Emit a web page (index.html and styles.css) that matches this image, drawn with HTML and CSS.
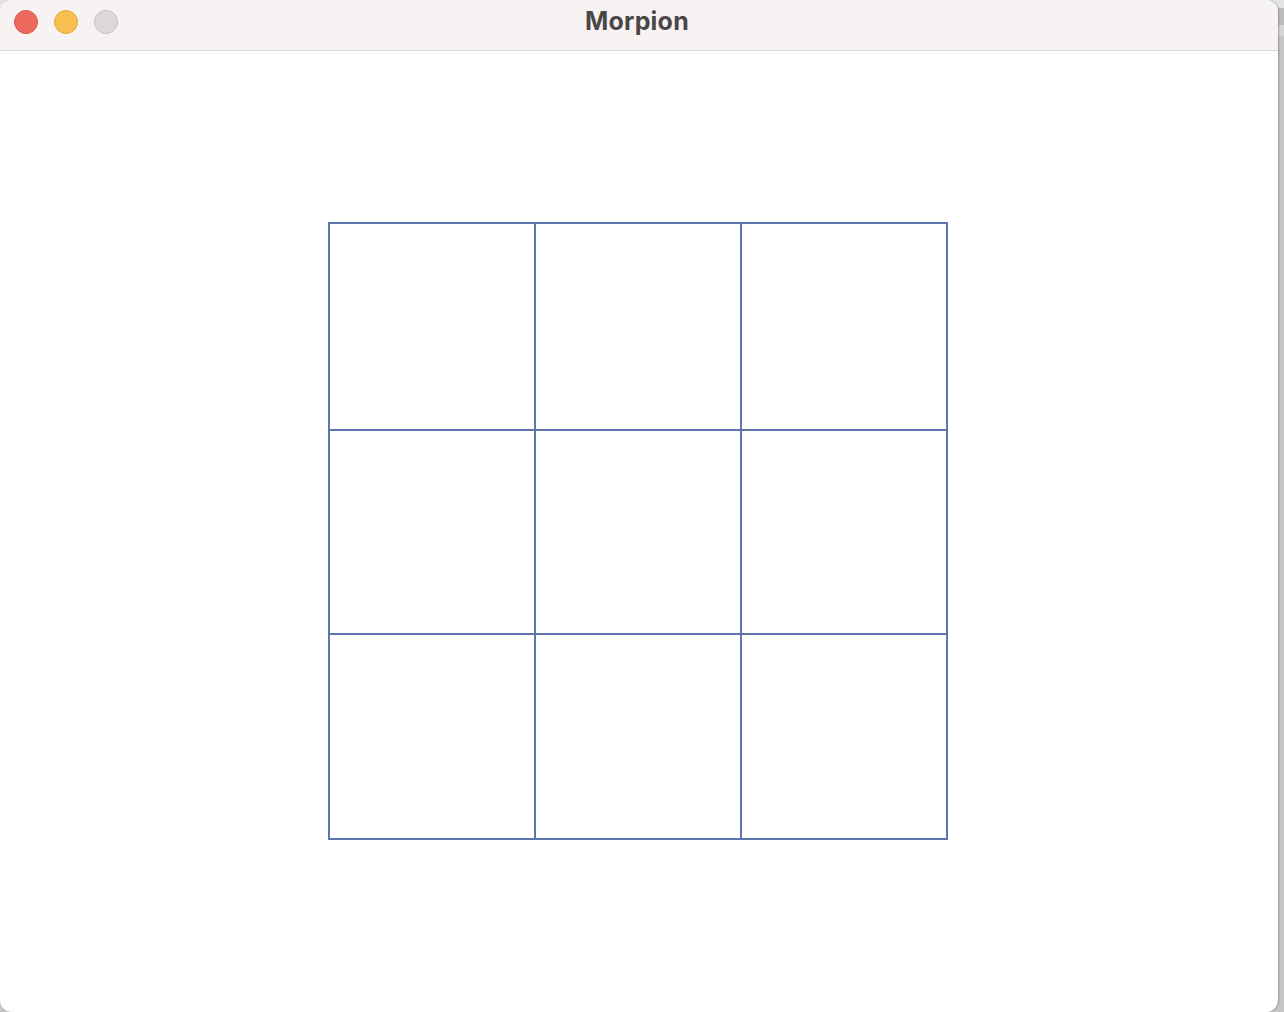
FILE: index.html
```html
<!DOCTYPE html>
<html lang="fr">
<head>
<meta charset="utf-8">
<title>Morpion</title>
<link rel="stylesheet" href="styles.css">
</head>
<body>
<div class="desktop">
  <div class="window">
    <div class="titlebar">
      <div class="lights">
        <span class="light red"></span>
        <span class="light yellow"></span>
        <span class="light gray"></span>
      </div>
      <div class="title">Morpion</div>
    </div>
    <div class="content">
      <div class="board">
        <div class="cell"></div><div class="cell"></div><div class="cell"></div>
        <div class="cell"></div><div class="cell"></div><div class="cell"></div>
        <div class="cell"></div><div class="cell"></div><div class="cell"></div>
      </div>
    </div>
  </div>
  <div class="side"></div>
</div>
</body>
</html>
```
FILE: styles.css
```css
html, body {
  margin: 0;
  padding: 0;
  height: 100%;
}
body {
  background: #d0d0d0;
  overflow: hidden;
  font-family: Inter, "Noto Sans", "Liberation Sans", sans-serif;
}
.desktop {
  display: flex;
  width: 1284px;
  height: 1012px;
  background: linear-gradient(#e4e4e4 0, #e4e4e4 8px, #bdbdbd 8px, #bdbdbd 25px, #d6d6d6 25px, #d6d6d6 36px, #c6c6c6 36px);
}
.window {
  width: 1278px;
  height: 1012px;
  border-radius: 12px;
  overflow: hidden;
  background: #ffffff;
  display: flex;
  flex-direction: column;
  box-shadow: 1px 0 2px rgba(0,0,0,0.25);
}
.side {
  flex: 1;
}
.titlebar {
  height: 50px;
  flex: none;
  background: #f8f3f3;
  border-bottom: 1px solid #dbd8d8;
  display: flex;
  align-items: flex-start;
  position: relative;
}
.lights {
  display: flex;
  gap: 16px;
  padding-left: 14px;
  padding-top: 10px;
}
.light {
  width: 24px;
  height: 24px;
  border-radius: 50%;
  box-sizing: border-box;
  display: block;
}
.red {
  background: #ee6a5f;
  border: 1px solid #d9574d;
}
.yellow {
  background: #f6bf4f;
  border: 1px solid #dea63a;
}
.gray {
  background: #ddd9d8;
  border: 1px solid #c6c2c1;
}
.title {
  position: absolute;
  left: 0;
  right: 0;
  top: 0;
  height: 50px;
  line-height: 42px;
  text-align: center;
  font-weight: 700;
  font-size: 25px;
  color: #4a4646;
  letter-spacing: 0.2px;
  padding-right: 4px;
  pointer-events: none;
}
.content {
  flex: 1;
  display: flex;
  align-items: center;
  justify-content: center;
}
.board {
  display: grid;
  grid-template-columns: repeat(3, 204px);
  grid-template-rows: 205px 202px 203px;
  gap: 2px;
  padding: 2px;
  background: #5f75ad;
  margin-left: -3px;
  margin-top: -2px;
}
.cell {
  background: #ffffff;
}
```
